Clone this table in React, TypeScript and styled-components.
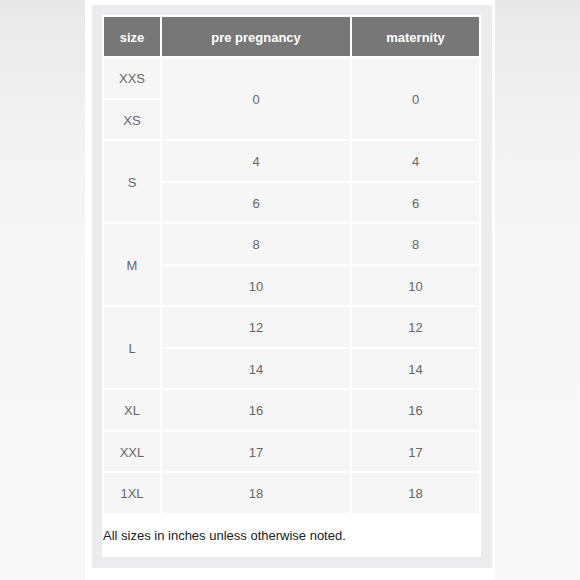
import * as React from "react";
import styled, { createGlobalStyle } from "styled-components";

const GlobalStyle = createGlobalStyle`
  html, body {
    margin: 0;
    padding: 0;
    background: #ffffff;
  }
  body {
    font-family: "Liberation Sans", Arial, sans-serif;
  }
`;

const Page = styled.div`
  display: flex;
  width: 580px;
  height: 580px;
  background: #ffffff;
`;

const Side = styled.div<{ right?: boolean }>`
  width: 85px;
  flex-shrink: 0;
  background: linear-gradient(
    to bottom,
    #e8e8e8 0%,
    #f2f2f2 22%,
    #f7f7f8 45%,
    #f8f8f9 100%
  );
  margin-left: ${props => (props.right ? "3px" : "0")};
  margin-right: ${props => (props.right ? "0" : "7px")};
`;

const Panel = styled.div`
  width: 400px;
  margin-top: 5px;
  height: 563px;
  box-sizing: border-box;
  background: #ececee;
  padding: 10px 11px 11px 10px;
`;

const Sheet = styled.div`
  background: #ffffff;
  height: 100%;
`;

const Table = styled.table`
  border-collapse: separate;
  border-spacing: 2px;
  width: 379px;
  table-layout: fixed;
`;

const Head = styled.th<{ w: number }>`
  width: ${props => props.w}px;
  height: 38px;
  padding: 1px 0 0;
  background: #777777;
  color: #ffffff;
  font-weight: bold;
  font-size: 13px;
  text-align: center;
`;

const Cell = styled.td`
  height: 38px;
  padding: 1.5px 0 0;
  background: #f6f6f6;
  color: #666666;
  font-size: 13px;
  text-align: center;
  vertical-align: middle;
`;

const Note = styled.p`
  margin: 13px 0 0 1px;
  font-size: 13px;
  color: #222222;
`;

type Row = { size?: string; span?: number; pre?: string; mat?: string; valSpan?: number };

const rows: Row[] = [
  { size: "XXS", pre: "0", mat: "0", valSpan: 2 },
  { size: "XS" },
  { size: "S", span: 2, pre: "4", mat: "4" },
  { pre: "6", mat: "6" },
  { size: "M", span: 2, pre: "8", mat: "8" },
  { pre: "10", mat: "10" },
  { size: "L", span: 2, pre: "12", mat: "12" },
  { pre: "14", mat: "14" },
  { size: "XL", pre: "16", mat: "16" },
  { size: "XXL", pre: "17", mat: "17" },
  { size: "1XL", pre: "18", mat: "18" },
];

const App: React.FC = () => (
  <>
    <GlobalStyle />
    <Page>
      <Side />
      <Panel>
        <Sheet>
          <Table>
            <thead>
              <tr>
                <Head w={56}>size</Head>
                <Head w={188}>pre pregnancy</Head>
                <Head w={127}>maternity</Head>
              </tr>
            </thead>
            <tbody>
              {rows.map((r, i) => (
                <tr key={i}>
                  {r.size && <Cell rowSpan={r.span}>{r.size}</Cell>}
                  {r.pre && <Cell rowSpan={r.valSpan}>{r.pre}</Cell>}
                  {r.mat && <Cell rowSpan={r.valSpan}>{r.mat}</Cell>}
                </tr>
              ))}
            </tbody>
          </Table>
          <Note>All sizes in inches unless otherwise noted.</Note>
        </Sheet>
      </Panel>
      <Side right />
    </Page>
  </>
);

export default App;
